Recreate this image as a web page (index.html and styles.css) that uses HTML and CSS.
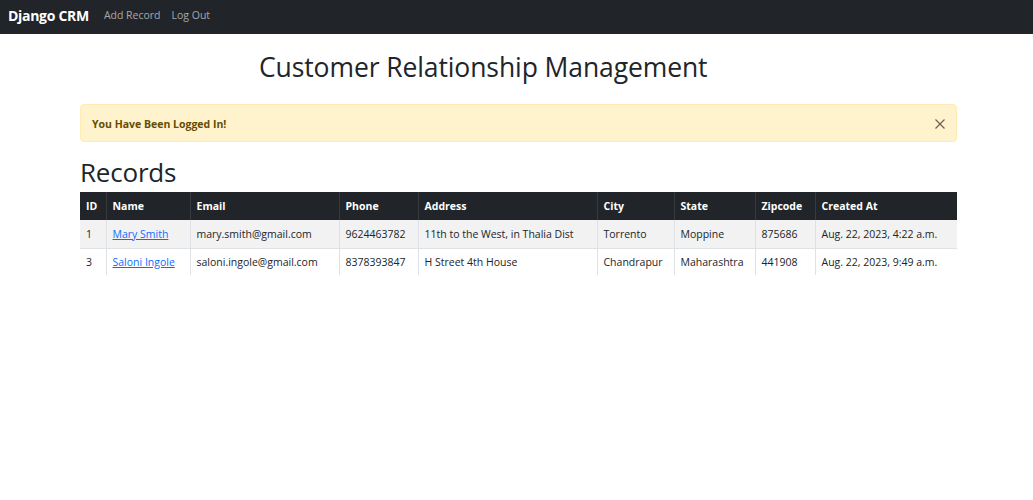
FILE: index.html
```html
<!DOCTYPE html>
<html lang="en">
<head>
<meta charset="utf-8">
<title>Django CRM</title>
<link rel="stylesheet" href="styles.css">
</head>
<body>
<nav class="navbar">
  <a class="brand" href="#">Django CRM</a>
  <a class="nav-link" href="#">Add Record</a>
  <a class="nav-link" href="#">Log Out</a>
</nav>
<main class="container">
  <h1 class="title">Customer Relationship Management</h1>
  <div class="alert">
    <strong>You Have Been Logged In!</strong>
    <button class="close" aria-label="Close">
      <svg width="12" height="12" viewBox="0 0 16 16"><path d="M2 2L14 14M14 2L2 14" stroke="#6b6250" stroke-width="1.6" fill="none"/></svg>
    </button>
  </div>
  <h2 class="records">Records</h2>
  <table class="table">
    <colgroup>
      <col class="col-id"><col class="col-name"><col class="col-email"><col class="col-phone"><col class="col-address"><col class="col-city"><col class="col-state"><col class="col-zip"><col class="col-created">
    </colgroup>
    <thead>
      <tr><th>ID</th><th>Name</th><th>Email</th><th>Phone</th><th>Address</th><th>City</th><th>State</th><th>Zipcode</th><th>Created At</th></tr>
    </thead>
    <tbody>
      <tr class="odd"><td>1</td><td><a href="#">Mary Smith</a></td><td>mary.smith@gmail.com</td><td>9624463782</td><td>11th to the West, in Thalia Dist</td><td>Torrento</td><td>Moppine</td><td>875686</td><td>Aug. 22, 2023, 4:22 a.m.</td></tr>
      <tr><td>3</td><td><a href="#">Saloni Ingole</a></td><td>saloni.ingole@gmail.com</td><td>8378393847</td><td>H Street 4th House</td><td>Chandrapur</td><td>Maharashtra</td><td>441908</td><td>Aug. 22, 2023, 9:49 a.m.</td></tr>
    </tbody>
  </table>
</main>
</body>
</html>
```
FILE: styles.css
```css
* { box-sizing: border-box; }
body {
  margin: 0;
  font-family: "Open Sans", "Noto Sans", "Liberation Sans", sans-serif;
  color: #212529;
  background: #fff;
}
.navbar {
  height: 34px;
  background: #212529;
  display: flex;
  align-items: center;
  padding: 0 8px 4px;
}
.brand {
  color: #fff;
  font-weight: 700;
  font-size: 14px;
  text-decoration: none;
  margin-right: 15px;
  letter-spacing: -0.3px;
}
.nav-link {
  color: rgba(255,255,255,0.6);
  font-size: 10.5px;
  text-decoration: none;
  margin-right: 11px;
}
.container {
  width: 877px;
  margin: 0 0 0 80px;
  padding: 0;
}
.title {
  font-weight: 400;
  font-size: 26.5px;
  margin: 0;
  padding: 20px 0 0 179px;
  line-height: 1;
  height: 70px;
  letter-spacing: -0.1px;
}
.alert {
  height: 38px;
  background: #fff3cd;
  border: 1px solid #ffecb5;
  border-radius: 4px;
  color: #664d03;
  display: flex;
  align-items: center;
  justify-content: space-between;
  padding: 1px 11px 0;
  font-size: 10.5px;
}
.alert strong { font-weight: 700; }
.close {
  background: none;
  border: 0;
  padding: 0;
  display: flex;
  margin-right: -1px;
}
.records {
  font-weight: 400;
  font-size: 26px;
  margin: 0;
  padding-top: 12px;
  height: 50px;
  line-height: 36px;
  letter-spacing: -0.2px;
}
.table {
  width: 100%;
  border-collapse: collapse;
  table-layout: fixed;
  font-size: 10.5px;
}
.col-id { width: 26px; }
.col-name { width: 84px; }
.col-email { width: 149px; }
.col-phone { width: 79px; }
.col-address { width: 179px; }
.col-city { width: 77px; }
.col-state { width: 81px; }
.col-zip { width: 60px; }
.table th {
  background: #212529;
  color: #fff;
  font-weight: 700;
  text-align: left;
  height: 28px;
  padding: 0 6px;
  border-left: 1px solid #373b3e;
  white-space: nowrap;
}
.table th:first-child, .table td:first-child { border-left: 0; }
.table td {
  height: 28px;
  padding: 0 6px;
  border-bottom: 1px solid #dee2e6;
  border-left: 1px solid #dee2e6;
  white-space: nowrap;
  color: #212529;
}
.table tbody tr:last-child td { border-bottom: 0; height: 27px; }
.table tr.odd td { background: #f2f2f2; }
.table a { color: #0d6efd; }
```
